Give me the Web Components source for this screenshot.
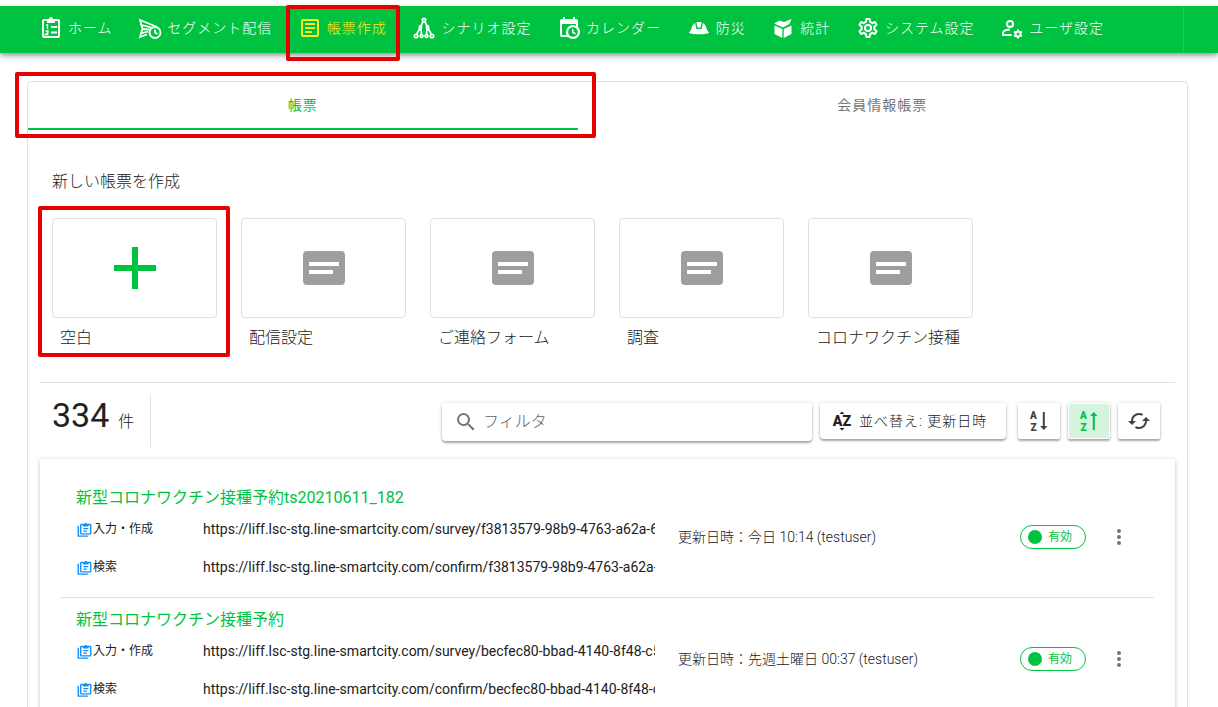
<!DOCTYPE html>
<html lang="ja">
<head>
<meta charset="utf-8">
<meta name="viewport" content="width=device-width, initial-scale=1">
<title>帳票作成</title>
<style>
  body {
    margin: 0;
    background: #fff;
    color: #212121;
    font-family: Roboto, "Noto Sans CJK JP", sans-serif;
    font-size: 16px;
    line-height: 24px;
    --green: #00c241;
    --line: #e0e0e0;
    --mark: #e60000;
  }
</style>
</head>
<body>
<app-header>
  <nav-item icon="home">ホーム</nav-item>
  <nav-item icon="segment">セグメント配信</nav-item>
  <nav-item icon="form" active>帳票作成</nav-item>
  <nav-item icon="scenario">シナリオ設定</nav-item>
  <nav-item icon="calendar">カレンダー</nav-item>
  <nav-item icon="helmet">防災</nav-item>
  <nav-item icon="box">統計</nav-item>
  <nav-item icon="cog">システム設定</nav-item>
  <nav-item icon="user">ユーザ設定</nav-item>
</app-header>
<form-page>
  <template-tile slot="tiles" icon="plus" marked>空白</template-tile>
  <template-tile slot="tiles" icon="card">配信設定</template-tile>
  <template-tile slot="tiles" icon="card">ご連絡フォーム</template-tile>
  <template-tile slot="tiles" icon="card">調査</template-tile>
  <template-tile slot="tiles" icon="card">コロナワクチン接種</template-tile>
  <list-toolbar slot="toolbar" count="334"></list-toolbar>
  <form-row>
    <span slot="title">新型コロナワクチン接種予約ts20210611_182</span>
    <span slot="survey">https://liff.lsc-stg.line-smartcity.com/survey/f3813579-98b9-4763-a62a-6</span>
    <span slot="confirm">https://liff.lsc-stg.line-smartcity.com/confirm/f3813579-98b9-4763-a62a-6</span>
    <span slot="updated">更新日時：今日 10:14 (testuser)</span>
  </form-row>
  <form-row>
    <span slot="title">新型コロナワクチン接種予約</span>
    <span slot="survey">https://liff.lsc-stg.line-smartcity.com/survey/becfec80-bbad-4140-8f48-c5</span>
    <span slot="confirm">https://liff.lsc-stg.line-smartcity.com/confirm/becfec80-bbad-4140-8f48-c5</span>
    <span slot="updated">更新日時：先週土曜日 00:37 (testuser)</span>
  </form-row>
</form-page>

<script>
const ICONS = {
  home: `<g fill="none" stroke="currentColor" stroke-width="2"><rect x="4" y="4" width="16" height="17" rx="1"/><path d="M12 11h6M12 16.500h6"/><path stroke-width="1.300" d="M7 9h1.500v4M6.500 15h2.500v1.500l-2.500 2h3"/></g><path fill="currentColor" d="M8 3h2a2 2 0 0 1 4 0h2v4H8z"/>`,
  segment: `<g fill="none" stroke="currentColor" stroke-width="1.800"><path d="M9 18.500 2 21l2.500-8.500L2 4l17 7M2 8.500 15 12M4.500 13l7 .5M3 17.500l7-2"/><circle cx="17" cy="16.500" r="5.500"/><path d="M17 13.500v3l2.500 1.500"/></g>`,
  form: `<path fill="currentColor" d="M5,3C3.89,3 3,3.89 3,5V19C3,20.11 3.89,21 5,21H19C20.11,21 21,20.11 21,19V5C21,3.89 20.11,3 19,3H5M5,5H19V19H5V5M7,7V9H17V7H7M7,11V13H17V11H7M7,15V17H14V15H7Z"/>`,
  scenario: `<g fill="none" stroke="currentColor" stroke-width="1.700"><circle cx="12" cy="4" r="1.700"/><circle cx="4" cy="20" r="1.700"/><circle cx="9.500" cy="20" r="1.400"/><circle cx="14.500" cy="20" r="1.400"/><circle cx="20" cy="20" r="1.700"/><circle cx="8.500" cy="11" r="1.200"/><circle cx="15.500" cy="11" r="1.200"/><path d="m11.200 5.500-2.200 4.300M12.800 5.500l2.200 4.300M7.900 12.200 4.600 18.500M8.900 12.200l.6 6.300M15.100 12.200l-.6 6.300M16.100 12.200l3.300 6.300"/></g>`,
  calendar: `<path fill="currentColor" d="M15,13H16.5V15.82L18.94,17.23L18.19,18.53L15,16.69V13M19,8H5V19H9.67C9.24,18.09 9,17.07 9,16A7,7 0 0,1 16,9C17.07,9 18.09,9.24 19,9.67V8M5,21C3.89,21 3,20.1 3,19V5C3,3.89 3.89,3 5,3H6V1H8V3H16V1H18V3H19A2,2 0 0,1 21,5V11.1C22.24,12.36 23,14.09 23,16A7,7 0 0,1 16,23C14.09,23 12.36,22.24 11.1,21H5M16,11.15A4.85,4.85 0 0,0 11.15,16C11.15,18.68 13.32,20.85 16,20.85A4.85,4.85 0 0,0 20.85,16C20.85,13.32 18.68,11.15 16,11.15Z"/>`,
  helmet: `<path fill="currentColor" d="M8.200 7 9.300 13h5.400L15.800 7c2.200 1 3.600 3.500 3.800 6.200L22.200 17c-5 1.700-15.400 1.700-20.400 0l2.600-3.800C4.600 10.500 6 8 8.200 7zM9.400 6h5.200l-1 5.500h-3.200z"/>`,
  box: `<path fill="currentColor" d="m3.500 9.500 7.800 3.500v9l-7.800-4zM20.500 9.500 12.700 13v9l7.800-4zM12 11.500 3 7.500 8.500 4.500 13 6l7.500-3-2 5z"/>`,
  cog: `<path fill="currentColor" d="M12,8A4,4 0 0,1 16,12A4,4 0 0,1 12,16A4,4 0 0,1 8,12A4,4 0 0,1 12,8M12,10A2,2 0 0,0 10,12A2,2 0 0,0 12,14A2,2 0 0,0 14,12A2,2 0 0,0 12,10M10,22C9.75,22 9.54,21.82 9.5,21.58L9.13,18.93C8.5,18.68 7.96,18.34 7.44,17.94L4.95,18.95C4.73,19.03 4.46,18.95 4.34,18.73L2.34,15.27C2.21,15.05 2.27,14.78 2.46,14.63L4.57,12.97L4.5,12L4.57,11L2.46,9.37C2.27,9.22 2.21,8.95 2.34,8.73L4.34,5.27C4.46,5.05 4.73,4.96 4.95,5.05L7.44,6.05C7.96,5.66 8.5,5.32 9.13,5.07L9.5,2.42C9.54,2.18 9.75,2 10,2H14C14.25,2 14.46,2.18 14.5,2.42L14.87,5.07C15.5,5.32 16.04,5.66 16.56,6.05L19.05,5.05C19.27,4.96 19.54,5.05 19.66,5.27L21.66,8.73C21.79,8.95 21.73,9.22 21.54,9.37L19.43,11L19.5,12L19.43,13L21.54,14.63C21.73,14.78 21.79,15.05 21.66,15.27L19.66,18.73C19.54,18.95 19.27,19.04 19.05,18.95L16.56,17.95C16.04,18.34 15.5,18.68 14.87,18.93L14.5,21.58C14.46,21.82 14.25,22 14,22H10M11.25,4L10.88,6.61C9.68,6.86 8.62,7.5 7.85,8.39L5.44,7.35L4.69,8.65L6.8,10.2C6.4,11.37 6.4,12.64 6.8,13.8L4.68,15.36L5.43,16.66L7.86,15.62C8.63,16.5 9.68,17.14 10.87,17.38L11.24,20H12.76L13.13,17.39C14.32,17.14 15.37,16.5 16.14,15.62L18.57,16.66L19.32,15.36L17.2,13.81C17.6,12.64 17.6,11.37 17.2,10.2L19.31,8.65L18.56,7.35L16.15,8.39C15.38,7.5 14.32,6.86 13.12,6.62L12.75,4H11.25Z"/>`,
  user: `<g fill="none" stroke="currentColor" stroke-width="2"><circle cx="10" cy="8" r="3"/><path d="M11.500 19H3v-2c0-2.200 3.500-3.500 7-3.500"/><circle cx="18" cy="18" r="2.500"/><path d="M18 13.500v2M18 20.500v2M14.100 15.700l1.700 1M20.200 19.200l1.700 1M14.100 20.300l1.700-1M20.200 16.700l1.700-1"/></g>`,
  plus: `<path fill="#00c241" d="M10.500 1.500h3v9h9v3h-9v9h-3v-9h-9v-3h9z"/>`,
  card: `<rect x="1.500" y="3.500" width="21" height="17" rx="2" fill="#9e9e9e"/><path fill="#fff" d="M4.500 9h15v2h-15zM4.500 13h12v2h-12z"/>`,
  search: `<path fill="currentColor" d="M9.5,3A6.5,6.5 0 0,1 16,9.5C16,11.11 15.41,12.59 14.44,13.73L14.71,14H15.5L20.5,19L19,20.5L14,15.5V14.71L13.73,14.44C12.59,15.41 11.11,16 9.5,16A6.5,6.5 0 0,1 3,9.5A6.5,6.5 0 0,1 9.5,3M9.5,5C7,5 5,7 5,9.5C5,12 7,14 9.5,14C12,14 14,12 14,9.5C14,7 12,5 9.5,5Z"/>`,
  sort: `<text x="12" y="18" text-anchor="middle" font-family="Roboto, sans-serif" font-weight="900" font-size="17" fill="currentColor">AZ</text><path fill="currentColor" d="M9 3.500 12 .5l3 3zM9 20.500l3 3 3-3z"/>`,
  down: `<g fill="currentColor" font-family="Roboto, sans-serif" font-weight="900" font-size="10" text-anchor="middle"><text x="6.500" y="10">A</text><text x="6.500" y="22">Z</text></g><path fill="currentColor" d="M15.800 3h2v14h2.700l-3.700 4-3.700-4h2.700z"/>`,
  up: `<g fill="currentColor" font-family="Roboto, sans-serif" font-weight="900" font-size="10" text-anchor="middle"><text x="6.500" y="10">A</text><text x="6.500" y="22">Z</text></g><path fill="currentColor" d="M15.800 21h2V7h2.700l-3.700-4-3.700 4h2.700z"/>`,
  refresh: `<path fill="currentColor" d="M19,8L15,12H18A6,6 0 0,1 12,18C11,18 10.03,17.75 9.2,17.3L7.74,18.76C8.97,19.54 10.43,20 12,20A8,8 0 0,0 20,12H23M6,12A6,6 0 0,1 12,6C13,6 13.97,6.25 14.8,6.7L16.26,5.24C15.03,4.46 13.57,4 12,4A8,8 0 0,0 4,12H1L5,16L9,12"/>`,
  copy: `<g fill="none" stroke="currentColor" stroke-width="2.200"><path d="M2 6v16.500h16"/><rect x="6" y="4" width="16" height="15" rx="1"/><path d="M10 10.500h8M10 14.500h6"/></g><path fill="currentColor" d="M9.500 3h2.200a2.500 2.500 0 0 1 4.600 0h2.200v4h-9z"/>`,
  more: `<path fill="currentColor" d="M12 16a2 2 0 1 1 0 4 2 2 0 0 1 0-4m0-6a2 2 0 1 1 0 4 2 2 0 0 1 0-4m0-6a2 2 0 1 1 0 4 2 2 0 0 1 0-4z"/>`
};

function define(name, render) {
  customElements.define(name, class extends HTMLElement {
    connectedCallback() {
      if (this.shadowRoot) return;
      this.attachShadow({ mode: "open" }).innerHTML = render(this);
    }
  });
}

define("app-icon", el => `
  <style>
    :host { display: block; flex: none; width: var(--size, 24px); height: var(--size, 24px); }
    svg { display: block; width: 100%; height: 100%; overflow: visible; }
  </style>
  <svg viewBox="0 0 24 24" aria-hidden="true">${ICONS[el.getAttribute("name")]}</svg>`);

define("app-header", () => `
  <style>
    :host { display: block; padding-top: 6px; }
    header { background: var(--green); box-shadow: 0 2px 4px rgba(0,0,0,.3), 0 4px 8px rgba(0,0,0,.16); padding-right: 34px; }
    nav { display: flex; justify-content: space-between; align-items: center; height: 44px;
      padding: 0 79px 3px 39px; border-right: 1px solid #1bc956; }
  </style>
  <header><nav><slot></slot></nav></header>`);

define("nav-item", el => `
  <style>
    :host { display: block; position: relative; color: #fff; font-size: 14px; font-weight: 300; letter-spacing: 1px; }
    :host([active]) { color: #ffeb1c; }
    a { display: flex; align-items: center; gap: 5px; color: inherit; text-decoration: none; white-space: nowrap; }
    .mark { position: absolute; inset: -11px -13px -21px -12px; border: 4px solid var(--mark); border-radius: 2px; pointer-events: none; }
  </style>
  <a href="#"><app-icon name="${el.getAttribute("icon")}"></app-icon><span><slot></slot></span></a>
  ${el.hasAttribute("active") ? '<div class="mark"></div>' : ""}`);

define("template-tile", el => `
  <style>
    :host { display: block; position: relative; width: 165px; font-weight: 300; }
    button { display: block; width: 100%; padding: 0; border: 0; background: none; font: inherit; color: inherit; text-align: left; }
    .box { display: flex; align-items: center; justify-content: center; height: 98px; border: 1px solid var(--line); border-radius: 4px; }
    app-icon { --size: 48px; }
    .label { display: block; margin-top: 8px; padding-left: 8px; white-space: nowrap; }
    .mark { position: absolute; inset: -12px -13px -7px -14px; border: 4px solid var(--mark); border-radius: 2px; pointer-events: none; }
  </style>
  <button type="button">
    <span class="box"><app-icon name="${el.getAttribute("icon")}"></app-icon></span>
    <span class="label"><slot></slot></span>
  </button>
  ${el.hasAttribute("marked") ? '<div class="mark"></div>' : ""}`);

define("list-toolbar", el => `
  <style>
    :host { display: flex; align-items: flex-start; padding: 12px 15px 12px 12px; border-top: 1px solid var(--line); }
    .count { display: flex; align-items: baseline; gap: 9px; height: 52px; padding-right: 16px; border-right: 1px solid var(--line); font-weight: 300; }
    .count b { font-size: 34px; line-height: 40px; font-weight: 400; }
    .tools { display: flex; flex: 1; justify-content: flex-end; align-items: flex-start; gap: 8px; padding: 8px 0 0 24px; }
    .search, button { box-shadow: 0 2px 2px rgba(0,0,0,.3), 0 0 4px rgba(0,0,0,.14); border-radius: 4px; background: #fff; }
    .search { display: flex; align-items: center; gap: 5px; flex: 0 1 370px; box-sizing: border-box; height: 38px; padding: 0 12px; color: #757575; }
    input { flex: 1; min-width: 0; border: 0; padding: 0; outline: 0; background: none; font: inherit; font-weight: 300; color: #212121; }
    input::placeholder { color: #616161; opacity: 1; }
    button { display: flex; align-items: center; justify-content: center; height: 36px; width: 42px; padding: 0; border: 0; color: #424242; font: inherit; }
    .search app-icon { --size: 24px; }
    .sort { justify-content: flex-start; width: 186px; gap: 7px; padding-left: 12px; margin-right: 4px; color: #212121; font-size: 14px; font-weight: 300; letter-spacing: 1px; white-space: nowrap; }
    .sort app-icon { --size: 20px; letter-spacing: 0; }
    .tool { border-radius: 2px; }
    .on { border: 1px solid #fff; background: #d4f4dd; color: var(--green); }
  </style>
  <div class="count"><b>${el.getAttribute("count")}</b><span>件</span></div>
  <div class="tools">
    <label class="search"><app-icon name="search"></app-icon><input type="text" placeholder="フィルタ" aria-label="フィルタ"></label>
    <button type="button" class="sort"><app-icon name="sort"></app-icon><span>並べ替え: 更新日時</span></button>
    <button type="button" class="tool" aria-label="昇順"><app-icon name="down"></app-icon></button>
    <button type="button" class="tool on" aria-label="降順"><app-icon name="up"></app-icon></button>
    <button type="button" class="tool" aria-label="更新"><app-icon name="refresh"></app-icon></button>
  </div>`);

define("form-row", () => `
  <style>
    :host { display: grid; grid-template-columns: minmax(0, 579fr) minmax(0, 365fr) 66px 45px; align-items: center;
      padding: 10px 23px 18px 15px; border-bottom: 1px solid var(--line); }
    a { color: var(--green); text-decoration: none; }
    .title { display: block; height: 24px; margin-bottom: 7px; white-space: nowrap; }
    .line { display: grid; grid-template-columns: 127px minmax(0, 1fr); height: 24px; }
    .line + .line { margin-top: 14px; }
    .name { display: flex; align-items: center; font-size: 12px; color: #212121; }
    button { padding: 0; border: 0; background: none; font: inherit; }
    .copy { color: #1090f8; padding: 0 1px; }
    .copy app-icon { --size: 15px; }
    .url { overflow: hidden; white-space: nowrap; font-size: 14px; }
    .meta { padding: 0 0 9px 23px; margin-top: 17px; font-size: 14px; font-weight: 300; white-space: nowrap; }
    .chip { display: flex; align-items: center; gap: 6px; box-sizing: border-box; height: 24px; padding-left: 7px; margin-top: 8px;
      border: 1px solid var(--green); border-radius: 12px; color: var(--green); font-size: 12px; line-height: 22px; }
    .chip::before { content: ""; width: 14px; height: 14px; border-radius: 50%; background: var(--green); }
    .menu { justify-self: end; margin-top: 8px; color: #757575; }
  </style>
  <div>
    <a class="title" href="#"><slot name="title"></slot></a>
    <div class="line"><span class="name"><button type="button" class="copy" aria-label="コピー"><app-icon name="copy"></app-icon></button>入力・作成</span><span class="url"><slot name="survey"></slot></span></div>
    <div class="line"><span class="name"><button type="button" class="copy" aria-label="コピー"><app-icon name="copy"></app-icon></button>検索</span><span class="url"><slot name="confirm"></slot></span></div>
  </div>
  <div class="meta"><slot name="updated"></slot></div>
  <span class="chip">有効</span>
  <button type="button" class="menu" aria-label="メニュー"><app-icon name="more"></app-icon></button>`);

define("form-page", () => `
  <style>
    :host { display: block; padding: 28px 30px 28px 27px; }
    main { border: 1px solid var(--line); border-radius: 4px; }
    .tabs { display: flex; position: relative; }
    .tabs button { height: 48px; padding: 0; border: 0; border-bottom: 2px solid transparent; background: none;
      font: inherit; font-size: 14px; letter-spacing: 1px; color: #757575; flex: 61 1 0; }
    .tabs button.on { flex: 55 1 0; color: var(--green); border-color: var(--green); }
    .mark { position: absolute; inset: -10px 51% -8px -13px; border: 4px solid var(--mark); border-radius: 2px; pointer-events: none; }
    .content { padding: 40px 12px 0; }
    h1 { margin: 0 12px 24px; font-size: 16px; line-height: 24px; font-weight: 300; }
    .tiles { display: flex; flex-wrap: wrap; gap: 24px; margin: 0 12px 32px; }
    .list { padding: 17px 21px 0; border-radius: 2px; box-shadow: 0 1px 4px rgba(0,0,0,.24); }
  </style>
  <main>
    <div class="tabs" role="tablist">
      <button type="button" role="tab" class="on" aria-selected="true">帳票</button>
      <button type="button" role="tab" aria-selected="false">会員情報帳票</button>
      <div class="mark"></div>
    </div>
    <div class="content">
      <h1>新しい帳票を作成</h1>
      <div class="tiles"><slot name="tiles"></slot></div>
      <slot name="toolbar"></slot>
      <section class="list"><slot></slot></section>
    </div>
  </main>`);
</script>
</body>
</html>
